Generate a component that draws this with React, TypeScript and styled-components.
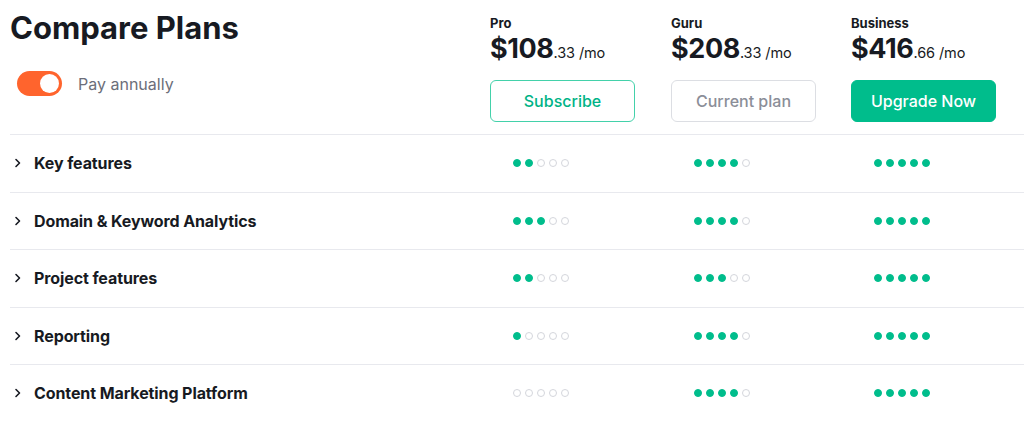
import React from "react";
import styled, { createGlobalStyle } from "styled-components";

const Global = createGlobalStyle`
  html, body { margin: 0; padding: 0; background: #fff; }
  body { font-family: Inter, "Noto Sans", Arial, sans-serif; color: #171a22; }
`;

const Page = styled.div`
  padding-left: 10px;
  width: 1014px;
`;

const Grid = styled.div`
  display: grid;
  grid-template-columns: 480px 181px 180px 1fr;
`;

const Header = styled(Grid)`
  height: 134px;
`;

const TitleCell = styled.div`
  padding-top: 10px;
  display: flex;
  flex-direction: column;
`;

const Title = styled.h1`
  margin: 0;
  font-size: 31px;
  line-height: 36px;
  font-weight: 700;
  letter-spacing: 0;
  color: #171a22;
`;

const ToggleRow = styled.label`
  margin-top: 25px;
  margin-left: 7px;
  display: flex;
  align-items: center;
  gap: 16px;
  font-size: 16px;
  color: #6c6e79;
`;

const Switch = styled.span<{ $on: boolean }>`
  position: relative;
  width: 45px;
  height: 25px;
  border-radius: 13px;
  background: ${(p) => (p.$on ? "#ff642d" : "#c4c7cf")};
  flex: none;
  &::after {
    content: "";
    position: absolute;
    top: 3px;
    left: ${(p) => (p.$on ? "23px" : "3px")};
    width: 19px;
    height: 19px;
    border-radius: 50%;
    background: #fff;
  }
`;

const PlanCell = styled.div`
  padding-top: 15px;
  display: flex;
  flex-direction: column;
`;

const PlanName = styled.div`
  font-size: 13px;
  line-height: 16px;
  font-weight: 700;
  color: #171a22;
`;

const Price = styled.div`
  margin-top: 2px;
  font-size: 27px;
  line-height: 32px;
  font-weight: 700;
  color: #171a22;
  letter-spacing: -0.4px;
`;

const Cents = styled.span`
  font-size: 14.5px;
  font-weight: 400;
  letter-spacing: -0.1px;
  color: #171a22;
`;

type Variant = "outline" | "current" | "solid";

const Button = styled.button<{ $variant: Variant }>`
  margin-top: 11px;
  width: 145px;
  height: 42px;
  border-radius: 6px;
  font-family: inherit;
  font-size: 16px;
  font-weight: 500;
  cursor: pointer;
  border: 1px solid
    ${(p) =>
      p.$variant === "outline" ? "#43d1aa" : p.$variant === "current" ? "#dcdee3" : "#00bd8c"};
  background: ${(p) => (p.$variant === "solid" ? "#00bd8c" : "#fff")};
  color: ${(p) =>
    p.$variant === "outline" ? "#00b386" : p.$variant === "current" ? "#8b8e98" : "#fff"};
`;

const Row = styled(Grid)`
  height: 57.5px;
  border-top: 1px solid #e8e9ee;
  align-items: center;
  box-sizing: border-box;
`;

const Label = styled.div`
  display: flex;
  align-items: center;
  gap: 12px;
  padding-left: 4px;
  font-size: 16px;
  font-weight: 700;
  letter-spacing: -0.1px;
  color: #171a22;
`;

const Dots = styled.div`
  display: flex;
  gap: 4px;
  padding-left: 23px;
`;

const Dot = styled.span<{ $on: boolean }>`
  width: 8px;
  height: 8px;
  border-radius: 50%;
  box-sizing: border-box;
  background: ${(p) => (p.$on ? "#00bd8c" : "#fff")};
  border: 1px solid ${(p) => (p.$on ? "#00bd8c" : "#d4d6dc")};
`;

const Chevron = () => (
  <svg width="8" height="10" viewBox="0 0 8 10" fill="none">
    <path d="M2 1.5 L5.5 5 L2 8.5" stroke="#171a22" strokeWidth="1.6" strokeLinecap="round" strokeLinejoin="round" />
  </svg>
);

const Rating = ({ n }: { n: number }) => (
  <Dots>
    {[0, 1, 2, 3, 4].map((i) => (
      <Dot key={i} $on={i < n} />
    ))}
  </Dots>
);

const plans: { name: string; whole: string; cents: string; cta: string; variant: Variant }[] = [
  { name: "Pro", whole: "$108", cents: ".33 /mo", cta: "Subscribe", variant: "outline" },
  { name: "Guru", whole: "$208", cents: ".33 /mo", cta: "Current plan", variant: "current" },
  { name: "Business", whole: "$416", cents: ".66 /mo", cta: "Upgrade Now", variant: "solid" },
];

const features: { name: string; ratings: number[] }[] = [
  { name: "Key features", ratings: [2, 4, 5] },
  { name: "Domain & Keyword Analytics", ratings: [3, 4, 5] },
  { name: "Project features", ratings: [2, 3, 5] },
  { name: "Reporting", ratings: [1, 4, 5] },
  { name: "Content Marketing Platform", ratings: [0, 4, 5] },
];

export default function App() {
  return (
    <>
      <Global />
      <Page>
        <Header>
          <TitleCell>
            <Title>Compare Plans</Title>
            <ToggleRow>
              <Switch $on />
              Pay annually
            </ToggleRow>
          </TitleCell>
          {plans.map((p) => (
            <PlanCell key={p.name}>
              <PlanName>{p.name}</PlanName>
              <Price>
                {p.whole}
                <Cents>{p.cents}</Cents>
              </Price>
              <Button $variant={p.variant}>{p.cta}</Button>
            </PlanCell>
          ))}
        </Header>
        {features.map((f) => (
          <Row key={f.name}>
            <Label>
              <Chevron />
              {f.name}
            </Label>
            {f.ratings.map((r, i) => (
              <Rating key={i} n={r} />
            ))}
          </Row>
        ))}
      </Page>
    </>
  );
}
